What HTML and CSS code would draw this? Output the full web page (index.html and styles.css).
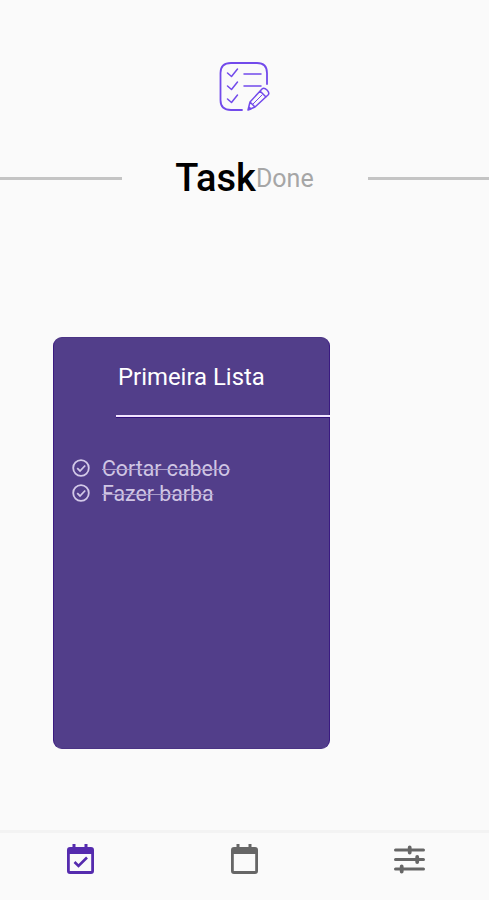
FILE: index.html
```html
<!DOCTYPE html>
<html lang="pt-BR">
<head>
<meta charset="utf-8">
<title>TaskDone</title>
<link rel="stylesheet" href="styles.css">
</head>
<body>
<div class="app">
  <header class="header">
    <svg class="logo" viewBox="0 0 52 50" fill="none" stroke="#724aeb" stroke-width="1.5" stroke-linecap="round" stroke-linejoin="round">
      <path d="M23 48H12Q1.500 48 1.500 38V11Q1.500 1 12 1H38Q48 1 48 11V22" stroke-width="1.8"/>
      <path d="M8.500 11l4 3.500 6-7.500M8.500 24l4 3.500 6-7.500M8.500 37l4 3.500 6-7.500"/>
      <path d="M25 12H42M25 24H42"/>
      <path d="M29 48l2-8L43 27Q45 25 48 28Q51 31 49 33L36 45ZM31 40l5 5M41 29l6 6M29 48l3-1-2-2Z"/>
      <path d="M34 42L43 33" stroke-width="1"/>
    </svg>
    <div class="brand-row">
      <span class="rule"></span>
      <h1 class="brand"><span class="brand-strong">Task</span><span class="brand-light">Done</span></h1>
      <span class="rule"></span>
    </div>
  </header>
  <main class="lists">
    <section class="card">
      <h2 class="card-title">Primeira Lista</h2>
      <div class="card-rule"></div>
      <ul class="tasks">
        <li class="task"><svg class="check" viewBox="0 0 18 18"><circle cx="9" cy="9" r="7.8"/><path d="M5.2 9.2l2.8 2.8 5.2-5.5"/></svg><span class="label">Cortar cabelo</span></li>
        <li class="task"><svg class="check" viewBox="0 0 18 18"><circle cx="9" cy="9" r="7.8"/><path d="M5.2 9.2l2.8 2.8 5.2-5.5"/></svg><span class="label">Fazer barba</span></li>
      </ul>
    </section>
  </main>
  <nav class="tabs">
    <a class="tab active"><svg class="tab-icon" viewBox="0 0 32 32"><path fill="currentColor" fill-rule="evenodd" d="M6.500 1h3v3h9V1h3v3H25q3 0 3 3v21q0 3-3 3H4q-3 0-3-3V7q0-3 3-3h2.500ZM3.800 11v17h21.400V11Z"/><path d="M8.500 19l4 4 8.500-8.500" fill="none" stroke="currentColor" stroke-width="2.6"/></svg></a>
    <a class="tab"><svg class="tab-icon" viewBox="0 0 32 32"><path fill="currentColor" fill-rule="evenodd" d="M6.500 1h3v3h9V1h3v3H25q3 0 3 3v21q0 3-3 3H4q-3 0-3-3V7q0-3 3-3h2.500ZM3.800 11v17h21.400V11Z"/></svg></a>
    <a class="tab"><svg class="tab-icon" viewBox="0 0 32 32" fill="none" stroke="currentColor" stroke-linecap="round"><path d="M1.500 7H29.500M1.500 16.500H29.500M1.500 26H29.500" stroke-width="3"/><path d="M15.700 4.500v5M23.200 14v5M7.700 23.500v5" stroke-width="3.8"/></svg></a>
  </nav>
</div>
</body>
</html>
```

FILE: styles.css
```css
* { box-sizing: border-box; }
body { margin: 0; background: #fafafa; font-family: Roboto, "Liberation Sans", sans-serif; }
.app { height: 900px; display: flex; flex-direction: column; overflow: hidden; }
.header { height: 337px; padding-top: 62px; display: flex; flex-direction: column; align-items: center; }
.logo { width: 52px; height: 50px; margin-left: 1px; }
.brand-row { width: 100%; height: 44px; margin-top: 44px; display: flex; align-items: center; justify-content: space-between; }
.rule { width: 121.5px; height: 3px; background: #c4c4c4; }
.brand { margin: 0; display: flex; align-items: center; font-weight: 400; line-height: 44px; white-space: nowrap; }
.brand-strong { font-size: 38px; font-weight: 500; color: #000; }
.brand-light { padding-top: 1px; font-size: 25px; color: #a6a6a6; }
.lists { flex: 1; padding-left: 53px; }
.card { width: 277px; height: 412px; border: 1px solid #3a1a80; border-top-color: #4b3485; border-bottom-color: #4b3485; border-radius: 9px; background: #523e8a; }
.card-title { margin: 23px 0 0 64px; font-size: 23.9px; line-height: 32px; font-weight: 400; color: #fff; white-space: nowrap; }
.card-rule { margin: 22px -1px 0 62px; height: 3px; background: #f1e4ff; border-bottom: 1px solid #32107c; }
.tasks { list-style: none; margin: 37px 0 0 17.5px; padding: 0; }
.task { display: flex; align-items: center; height: 25px; }
.check { width: 18px; height: 18px; fill: none; stroke: #d3c9e8; stroke-width: 1.8; }
.label { margin-left: 12.5px; padding-top: 1px; font-size: 21.3px; line-height: 25px; color: #d0c6e4; text-decoration: line-through; text-decoration-color: #a99bc8; text-decoration-thickness: 1px; white-space: nowrap; }
.tabs { height: 70px; border-top: 3px solid #f3f3f3; display: flex; justify-content: space-between; padding: 10px 63px 0 66px; }
.tab { color: #666; }
.active { color: #552bae; }
.tab-icon { width: 32px; height: 32px; display: block; }
```
